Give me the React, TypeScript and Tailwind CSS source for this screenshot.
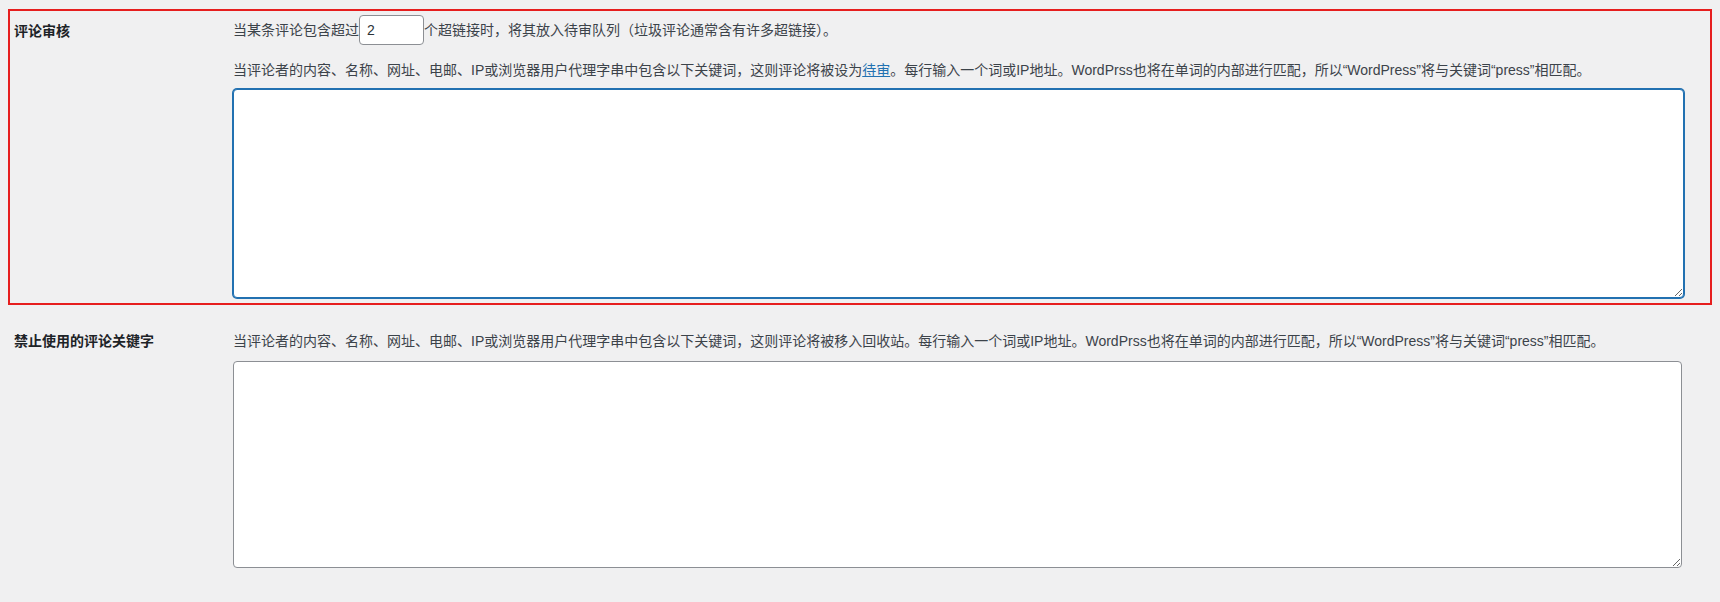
export default function App() {
  const font = { fontFamily: '"Liberation Sans", "Noto Sans CJK SC", sans-serif' };
  return (
    <div className="w-[1720px] h-[602px] bg-[#f0f0f1] text-[#3c434a] text-[14px] overflow-hidden pt-[9px]" style={font}>
      <div className="mx-[8px] border-2 border-[#e61e1e] flex pt-[3px] pb-[10px] h-[296px]">
        <div className="w-[223px] pl-[4px] pt-[7px] font-bold text-[#1d2327]">评论审核</div>
        <div className="flex-1 pr-[26px]">
          <div className="flex items-center h-[32px]">
            <span>当某条评论包含超过</span>
            <input defaultValue="2" className="w-[65px] h-[30px] bg-white border border-[#8c8f94] rounded-[4px] px-[7px] text-[14px] text-[#2c3338]" />
            <span>个超链接时，将其放入待审队列（垃圾评论通常含有许多超链接）。</span>
          </div>
          <p className="mt-[14px] leading-[20px]">
            当评论者的内容、名称、网址、电邮、IP或浏览器用户代理字串中包含以下关键词，这则评论将被设为<a className="text-[#2271b1] underline">待审</a>。每行输入一个词或IP地址。WordPrss也将在单词的内部进行匹配，所以“WordPress”将与关键词“press”相匹配。
          </p>
          <textarea className="block mt-[9px] w-full h-[209px] bg-white border border-[#2271b1] rounded-[4px] shadow-[0_0_0_1px_#2271b1] outline-none" />
        </div>
      </div>
      <div className="mx-[10px] flex pt-[26px]">
        <div className="w-[223px] pl-[4px] font-bold text-[#1d2327]">禁止使用的评论关键字</div>
        <div className="flex-1 pr-[28px]">
          <p className="leading-[20px]">当评论者的内容、名称、网址、电邮、IP或浏览器用户代理字串中包含以下关键词，这则评论将被移入回收站。每行输入一个词或IP地址。WordPrss也将在单词的内部进行匹配，所以“WordPress”将与关键词“press”相匹配。</p>
          <textarea className="block mt-[10px] w-full h-[207px] bg-white border border-[#8c8f94] rounded-[4px] outline-none" />
        </div>
      </div>
    </div>
  );
}
